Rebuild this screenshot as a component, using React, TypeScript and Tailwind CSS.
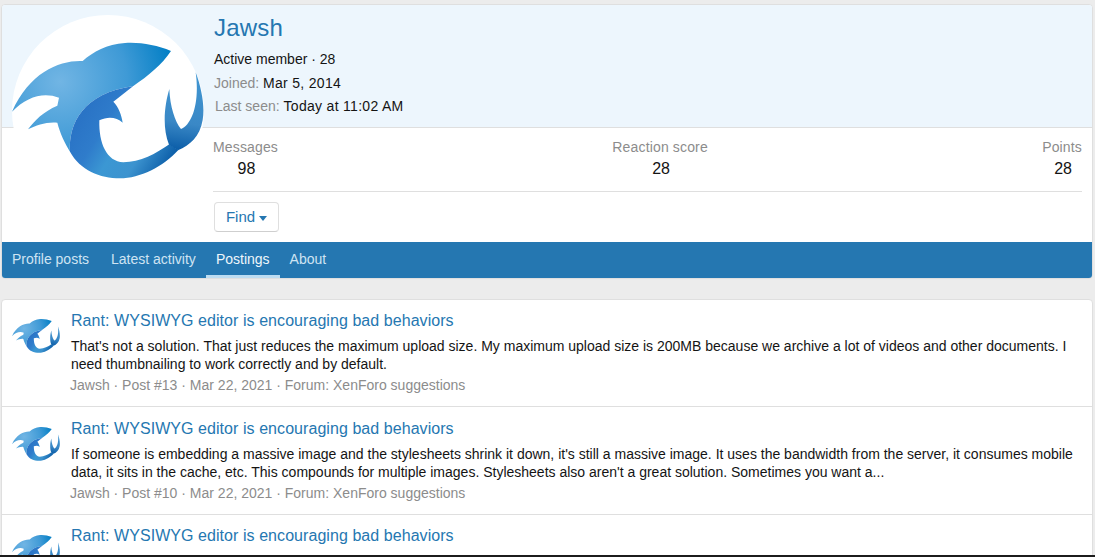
const Shark = ({ id, className }: { id: string; className: string }) => (
  <svg viewBox="36 15 576 576" className={className}>
    <defs>
      <radialGradient id={id + "a"} gradientUnits="userSpaceOnUse" cx="180" cy="215" r="335">
        <stop offset="0" stopColor="#71b5e4" />
        <stop offset="0.6" stopColor="#3f9ad6" />
        <stop offset="1" stopColor="#0580c6" />
      </radialGradient>
      <linearGradient id={id + "b"} gradientUnits="userSpaceOnUse" x1="260" y1="300" x2="530" y2="470">
        <stop offset="0" stopColor="#2a74c6" />
        <stop offset="0.22" stopColor="#2f7ccb" />
        <stop offset="0.42" stopColor="#3b97d3" />
        <stop offset="0.65" stopColor="#3c93cf" />
        <stop offset="0.92" stopColor="#0d5fa9" />
      </linearGradient>
      <linearGradient id={id + "c"} gradientUnits="userSpaceOnUse" x1="560" y1="190" x2="525" y2="415">
        <stop offset="0" stopColor="#4096d2" />
        <stop offset="0.65" stopColor="#3a88c6" />
        <stop offset="1" stopColor="#0d5fa9" />
      </linearGradient>
    </defs>
    <path
      fill={`url(#${id}a)`}
      d="M513 123C470 105 420 96 375 99C320 103 280 125 248 153C180 150 90 185 36 305C80 260 130 245 177 263L172 287C130 305 105 330 84 358C110 345 140 335 172 338C180 370 195 400 210 425C205 340 250 250 400 228C445 197 485 165 513 123Z"
    />
    <path
      fill={`url(#${id}b)`}
      d="M400 228L340 275C355 290 365 315 368 338C350 322 325 318 298 331C296 400 320 455 370 457C420 457 470 430 508 403L535 420C490 470 420 505 360 505C300 505 240 480 210 425C205 340 250 250 400 228Z"
    />
    <path
      fill={`url(#${id}c)`}
      d="M507 404C485 350 495 280 508 237C510 290 525 335 543 357C575 345 600 280 587 187C605 235 615 290 608 330C600 380 570 405 534 421Z"
    />
  </svg>
);

const Stat = ({ label, value, align }: { label: string; value: string; align: string }) => (
  <div className={"flex flex-col " + align}>
    <div className="text-[14px] tracking-[0.15px] text-[#8c8c8c] leading-[21px]">{label}</div>
    <div className="text-[#141414] text-base leading-[21px] text-center self-center ml-0.5">{value}</div>
  </div>
);

const posts = [
  {
    text: "That's not a solution. That just reduces the maximum upload size. My maximum upload size is 200MB because we archive a lot of videos and other documents. I need thumbnailing to work correctly and by default.",
    num: "13",
    row: "h-[107px] pt-[11px]",
    pic: "mt-px",
  },
  {
    text: "If someone is embedding a massive image and the stylesheets shrink it down, it's still a massive image. It uses the bandwidth from the server, it consumes mobile data, it sits in the cache, etc. This compounds for multiple images. Stylesheets also aren't a great solution. Sometimes you want a...",
    num: "10",
    row: "h-[108px] pt-3",
    pic: "mt-px",
  },
  {
    text: "It'd be nice to have a configuration option to disable the editor's image resizing feature altogether so that uploaded images are displayed at their natural size by default instead of being scaled down.",
    num: "8",
    row: "h-[108px] pt-[11px]",
    pic: "mt-0.5",
  },
];

export default function App() {
  return (
    <div className="h-[557px] overflow-hidden bg-[#ececec] pl-px pr-0.5 pt-1 relative font-['Liberation_Sans',sans-serif] text-[14px] text-[#141414]">
      <div className="border border-[#dfdfdf] rounded bg-white overflow-hidden">
        <div className="relative flex">
          <div className="absolute left-[10px] top-[10px] w-[192px] h-[192px] rounded-full bg-white z-10">
            <Shark id="big" className="w-[192px] h-[192px]" />
          </div>
          <div className="flex-1 min-w-0">
            <div className="h-[123px] bg-[#edf6fd] border-b border-[#dfdfdf] pl-[212px] pt-1.5">
              <h1 className="text-2xl leading-[34px] tracking-[0.2px] text-[#2577b1]">Jawsh</h1>
              <div className="leading-[23.5px] mt-[3px]">Active member · 28</div>
              <div className="leading-[23.5px]"><span className="text-[#8c8c8c]">Joined:</span> <span className="tracking-[0.3px]">Mar 5, 2014</span></div>
              <div className="leading-[23.5px] pl-px"><span className="text-[#8c8c8c]">Last seen:</span> <span className="tracking-[0.3px]">Today at 11:02 AM</span></div>
            </div>
            <div className="pl-[211px] pr-2.5 pt-[9px] h-[114px]">
              <div className="flex justify-between pb-[12px] border-b border-[#dfdfdf]">
                <Stat label="Messages" value="98" align="items-start" />
                <Stat label="Reaction score" value="28" align="items-center" />
                <Stat label="Points" value="28" align="items-end" />
              </div>
              <button className="mt-[10px] ml-px h-[30px] w-[65px] text-[15px] rounded border border-[#dfdfdf] border-b-[#cfcfcf] bg-white text-[#2577b1] flex items-center justify-center gap-1">
                Find
                <span className="w-0 h-0 border-x-[4px] border-x-transparent border-t-[5px] border-t-[#2577b1] mt-0.5" />
              </button>
            </div>
          </div>
        </div>
        <nav className="h-9 bg-[#2577b1] flex text-[14px] text-[#cfe4f3]">
          <a className="px-2.5 leading-[34px]">Profile posts</a>
          <a className="px-2.5 ml-0.5 leading-[34px]">Latest activity</a>
          <a className="px-2.5 leading-[34px] text-[#eef6fb] border-b-[3px] border-[#bcdcf2]">Postings</a>
          <a className="px-2.5 leading-[34px]">About</a>
        </nav>
      </div>
      <div className="mt-5 border border-[#dfdfdf] rounded bg-white">
        {posts.map((p) => (
          <div key={p.num} className={"flex gap-[11px] pl-2.5 pr-2.5 border-b border-[#dfdfdf] " + p.row}>
            <Shark id={"s" + p.num} className={"w-12 h-12 shrink-0 " + p.pic} />
            <div className="min-w-0 flex-1">
              <h3 className="text-base leading-[20px] tracking-[0.06px] text-[#2577b1]">Rant: WYSIWYG editor is encouraging bad behaviors</h3>
              <div className="mt-1.5 leading-[18px] text-[#141414]">{p.text}</div>
              <div className="mt-0.5 -ml-px leading-5 text-[#8c8c8c]">Jawsh · Post #{p.num} · Mar 22, 2021 · Forum: XenForo suggestions</div>
            </div>
          </div>
        ))}
      </div>
      <div className="absolute left-0 right-0 bottom-0 h-0.5 bg-[#1c1c1c]" />
    </div>
  );
}
